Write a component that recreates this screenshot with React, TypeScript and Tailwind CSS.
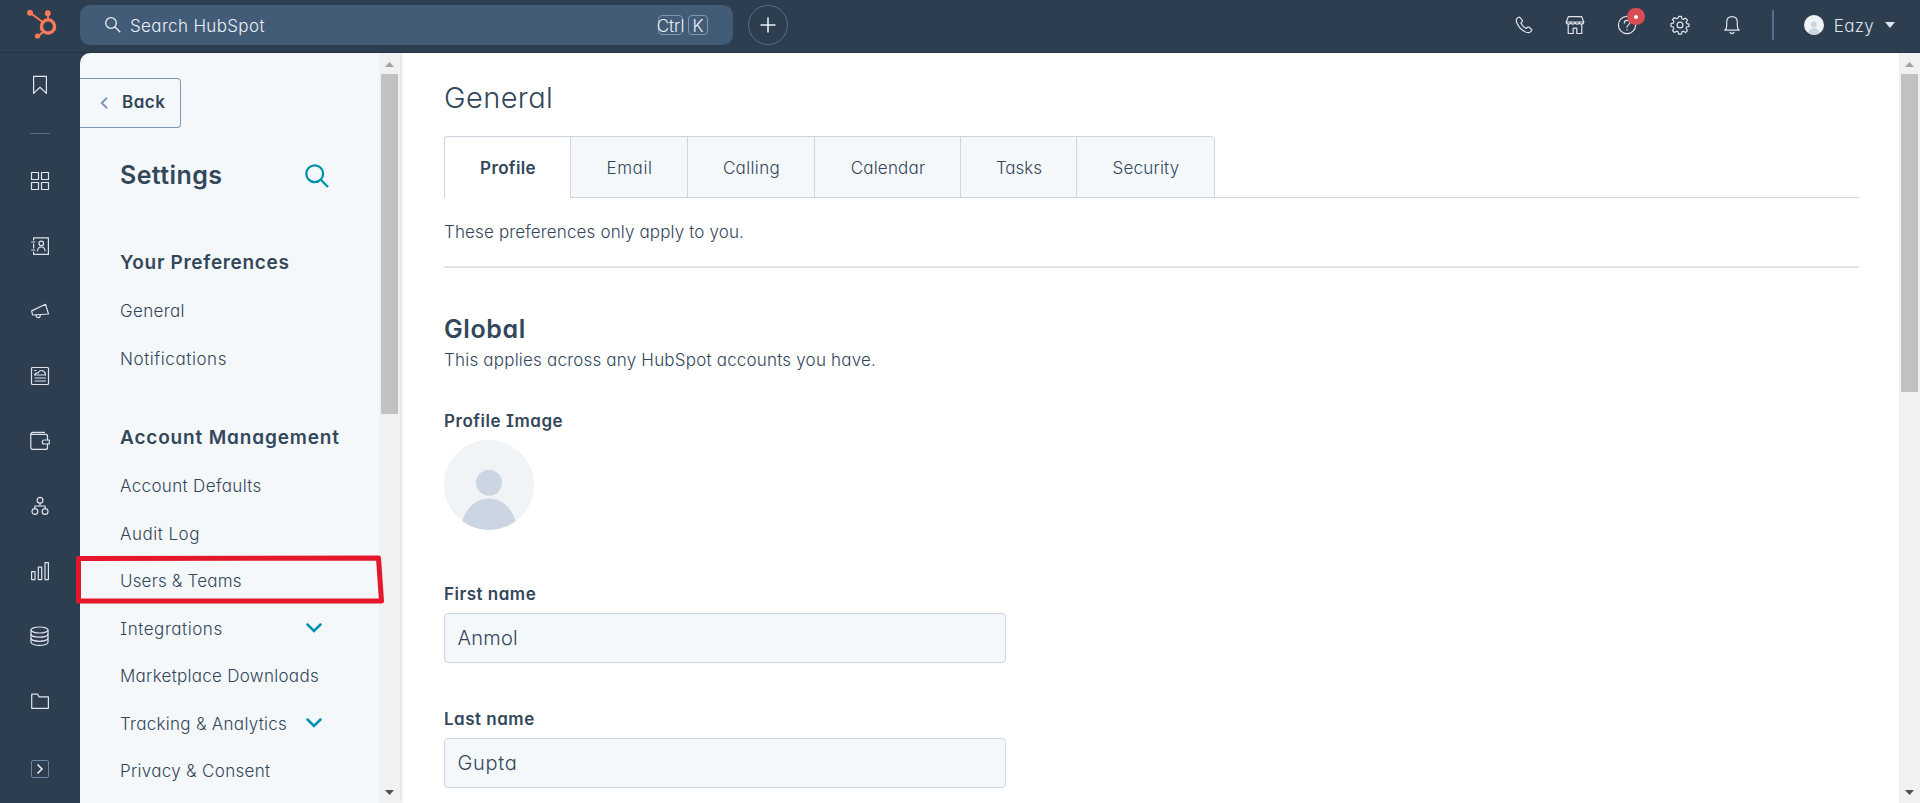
import React from "react";

interface NavItem {
    label: string;
    spacing: string;
    expandable?: boolean;
}

const preferences: NavItem[] = [
    { label: "General", spacing: "tracking-[0.35px]" },
    { label: "Notifications", spacing: "tracking-[0.58px]" },
];

const accountManagement: NavItem[] = [
    { label: "Account Defaults", spacing: "tracking-[0.35px]" },
    { label: "Audit Log", spacing: "tracking-[0.5px]" },
    { label: "Users & Teams", spacing: "tracking-[0.17px]" },
    { label: "Integrations", spacing: "tracking-[0.55px]", expandable: true },
    { label: "Marketplace Downloads", spacing: "tracking-[0.28px]" },
    { label: "Tracking & Analytics", spacing: "tracking-[0.28px]", expandable: true },
    { label: "Privacy & Consent", spacing: "tracking-[0.3px]" },
];

const tabs = [
    { label: "Profile", className: "w-[126px] bg-white border-b-transparent font-semibold tracking-[0.35px] rounded-tl-[4px]" },
    { label: "Email", className: "w-[117px] bg-[#f5f8fa] tracking-[0.6px]" },
    { label: "Calling", className: "w-[127px] bg-[#f5f8fa] tracking-[0.35px]" },
    { label: "Calendar", className: "w-[146px] bg-[#f5f8fa] tracking-[0.2px]" },
    { label: "Tasks", className: "w-[116px] bg-[#f5f8fa]" },
    { label: "Security", className: "w-[139px] bg-[#f5f8fa] tracking-[0.2px] border-r rounded-tr-[4px]" },
];

function Icon({ children, className = "size-5" }: { children: React.ReactNode; className?: string }) {
    return (
        <svg
            viewBox="0 0 20 20"
            fill="none"
            stroke="currentColor"
            strokeWidth="1.2"
            strokeLinejoin="round"
            strokeLinecap="round"
            className={className}
        >
            {children}
        </svg>
    );
}

const railIcons: { name: string; icon: React.ReactNode }[] = [
    {
        name: "Workspaces",
        icon: (
            <>
                <rect x="1.5" y="1.5" width="7" height="7" />
                <rect x="11.5" y="1.5" width="7" height="7" />
                <rect x="1.5" y="11.5" width="7" height="7" />
                <rect x="11.5" y="11.5" width="7" height="7" />
            </>
        ),
    },
    {
        name: "Contacts",
        icon: (
            <>
                <path d="M3.6 4V1.8h14.8v16.6H3.6v-2.2M3.6 8v4" />
                <path d="M1.6 6h3.2M1.6 14h3.2" />
                <circle cx="11.3" cy="7.4" r="2.3" />
                <path d="M7.6 14.8c.2-2.6 1.7-3.8 3.7-3.8s3.5 1.2 3.7 3.8" />
            </>
        ),
    },
    {
        name: "Marketing",
        icon: (
            <>
                <path d="M1.7 9.9 15.5 3.3l3 9.7-16 1z" />
                <path d="M6 14c.2 1.6 1.1 2.7 2.3 2.7s2-1 2-2.9" />
            </>
        ),
    },
    {
        name: "Content",
        icon: (
            <>
                <rect x="1.5" y="1.5" width="17" height="17" rx="1" />
                <path d="M4.5 9c.5-1.7 2-2.3 3.7-2 .8-2 2.5-2.8 4-2.3 2 .5 3.2 2 3.3 4.3zM5 12h10.5M5 15h10.5" />
                <path d="M4.5 4.5H6" />
            </>
        ),
    },
    {
        name: "Commerce",
        icon: (
            <>
                <path d="M14.5 1.3H3.2C1.8 1.3.8 2 .8 3.4v12.8c0 1.3.9 2.2 2.2 2.2h12.5c1.2 0 2-.8 2-2v-3.3" />
                <path d="M.8 3.4h14.7c1.2 0 2 .6 2 1.8v3.6" />
                <path d="M19.3 9h-5a2 2 0 0 0 0 4h5z" />
            </>
        ),
    },
    {
        name: "Automations",
        icon: (
            <>
                <circle cx="10" cy="4.3" r="2.9" />
                <circle cx="4.9" cy="15.5" r="2.9" />
                <circle cx="15.1" cy="15.5" r="2.9" />
                <path d="M10 7.2V10M4.9 12.6V10h10.2v2.6" />
            </>
        ),
    },
    {
        name: "Reporting",
        icon: (
            <>
                <rect x="1.6" y="10.6" width="3.4" height="8" />
                <rect x="8.3" y="6.2" width="3.4" height="12.4" />
                <rect x="15" y="1.6" width="3.4" height="17" />
            </>
        ),
    },
    {
        name: "Data",
        icon: (
            <>
                <ellipse cx="9.5" cy="4" rx="8.5" ry="3" />
                <path d="M1 4v12.2c0 1.8 3.8 3.2 8.5 3.2s8.5-1.4 8.5-3.2V4" />
                <path d="M1 8.2c0 1.7 3.8 3 8.5 3s8.5-1.3 8.5-3M1 12.3c0 1.7 3.8 3 8.5 3s8.5-1.3 8.5-3" />
            </>
        ),
    },
    {
        name: "Library",
        icon: <path d="M1.7 3.2h5.8l1.7 2.6h9.2v11.5H1.7z" />,
    },
];

function Logo() {
    return (
        <svg viewBox="0 0 30 30" className="size-[30px] text-[#ff7a59]" fill="none" stroke="currentColor">
            <circle cx="21" cy="16.5" r="6.6" strokeWidth="3.4" />
            <path d="M3.5 3 15.5 12M21 4v7M16.5 21.5 11 26.5" strokeWidth="1.9" />
            <g fill="currentColor" stroke="none">
                <circle cx="3" cy="2.8" r="3" />
                <circle cx="20.8" cy="3.2" r="2.9" />
                <circle cx="10.5" cy="26" r="2.6" />
            </g>
        </svg>
    );
}

function Avatar({ className }: { className: string }) {
    return (
        <svg viewBox="0 0 90 90" className={className}>
            <clipPath id="avatar-clip">
                <circle cx="45" cy="45" r="45" />
            </clipPath>
            <g clipPath="url(#avatar-clip)">
                <rect width="90" height="90" fill="#f0f4f7" />
                <circle cx="45" cy="42.7" r="13" fill="#cbd6e2" />
                <path d="M18 83c3-14 13.5-24.5 27-24.5S69 69 72 83v8H18z" fill="#cbd6e2" />
            </g>
        </svg>
    );
}

function Scrollbar({ thumb }: { thumb: string }) {
    return (
        <div className="flex w-[21px] shrink-0 flex-col items-center bg-[#f1f1f1]">
            <svg viewBox="0 0 21 21" className="h-[21px] w-[21px] shrink-0">
                <path d="M6 14h9l-4.5-5z" fill="#a3a3a3" />
            </svg>
            <div className={`w-[17px] shrink-0 bg-[#c1c1c1] ${thumb}`} />
            <svg viewBox="0 0 21 21" className="mt-auto h-[21px] w-[21px] shrink-0">
                <path d="M6 8h9l-4.5 5z" fill="#505050" />
            </svg>
        </div>
    );
}

function NavGroup({ title, items, spacing }: { title: string; items: NavItem[]; spacing: string }) {
    return (
        <div>
            <h3 className={`flex h-[50.5px] items-center text-[19px] font-semibold whitespace-nowrap ${spacing}`}>{title}</h3>
            <ul>
                {items.map((item) => (
                    <li key={item.label} className="flex h-[47.5px] items-center justify-between pr-[57px]">
                        <span className={`whitespace-nowrap ${item.spacing}`}>{item.label}</span>
                        {item.expandable && (
                            <svg viewBox="0 0 16 10" fill="none" className="mb-1 h-2.5 w-4 text-[#0091ae]">
                                <path d="M1.5 1.5 8 8l6.5-6.5" stroke="currentColor" strokeWidth="2.5" strokeLinecap="round" />
                            </svg>
                        )}
                    </li>
                ))}
            </ul>
        </div>
    );
}

function Field({ label, value, spacing }: { label: string; value: string; spacing: string }) {
    return (
        <div>
            <label className="flex h-6 items-center font-semibold tracking-[0.5px]">{label}</label>
            <input
                readOnly
                value={value}
                className={`mt-1.5 block h-[50px] w-[562px] rounded-[4px] border border-[#cbd6e2] bg-[#f5f8fa] px-[12.5px] text-[20px] ${spacing}`}
            />
        </div>
    );
}

function TopBar() {
    return (
        <header className="flex h-[53px] shrink-0 border-b border-[#253342] text-[#eaf0f6]">
            <div className="w-20 shrink-0 pt-[9.5px] pl-[27px]">
                <Logo />
            </div>
            <div className="mt-[5px] flex h-10 w-[653px] items-center rounded-[10px] bg-[#425b76] pr-[25px] pl-[25px]">
                <svg viewBox="0 0 16 16" className="size-4" fill="none" stroke="currentColor" strokeWidth="1.3">
                    <circle cx="6" cy="6" r="5.3" />
                    <path d="M9.8 9.8 15.3 15.3" />
                </svg>
                <span className="ml-[9px] pt-[3px] tracking-[0.35px]">Search HubSpot</span>
                <kbd className="ml-auto flex h-5 w-[25px] items-center justify-center rounded-[4px] border border-[#7c98b6] pt-[3px] font-[Inter]">
                    Ctrl
                </kbd>
                <kbd className="ml-[5px] flex size-5 items-center justify-center rounded-[4px] border border-[#7c98b6] pt-[3px] font-[Inter]">
                    K
                </kbd>
            </div>
            <div className="mt-[5px] ml-[15px] flex size-10 items-center justify-center rounded-full border border-[#516f90]">
                <svg viewBox="0 0 16 16" className="size-4" stroke="currentColor" strokeWidth="1.6">
                    <path d="M8 .5v15M.5 8h15" />
                </svg>
            </div>
            <div className="ml-auto flex h-[50px] items-center text-[#dfe3eb]">
                <Icon className="mr-[31px] size-5">
                    <path d="M4.4 2.4 3 3.5c-1 .9-.8 2.6-.2 4.2 1.7 4.3 5 7.7 9.4 9.5 1.7.6 3.2.8 4.2-.3l1-1c.5-.5.5-1.1 0-1.6l-2.3-2c-.5-.4-1.2-.4-1.6 0l-1.3 1.2c-2-.9-4.3-3.2-5.3-5.5l1.2-1.2c.4-.5.4-1 0-1.6L6 2.5c-.5-.5-1.1-.5-1.6-.1z" />
                </Icon>
                <Icon className="mr-8 size-5">
                    <path d="M3.3 1.6h13.4l2 5.4H1.3z" />
                    <path d="M1.3 7c0 2.8 4.3 2.8 4.3.3 0 2.5 4.4 2.5 4.4 0 0 2.5 4.4 2.5 4.4 0 0 2.5 4.3 2.5 4.3-.3" />
                    <path d="M3.2 9.5v9h5v-5.3h3.6v5.3h5v-9" />
                </Icon>
                <div className="relative mr-[33px]">
                    <Icon>
                        <circle cx="10" cy="10" r="8.6" />
                        <path d="M7.3 8c0-3.6 5.6-3.5 5.5-.2 0 2-2.8 2.2-2.8 4.4M10 14.5v.4" />
                    </Icon>
                    <span className="absolute -top-[7px] left-[10px] flex h-[17px] w-[18px] items-center justify-center rounded-full bg-[#d94c53]">
                        <span className="size-1 rounded-full bg-white" />
                    </span>
                </div>
                <Icon className="mr-8 size-5">
                    <circle cx="10" cy="10" r="2.9" />
                    <path d="M8.6 1.4h2.8l.5 2.4 1.5.6 2.1-1.3 2 2-1.4 2 .7 1.5 2.2.5v2.3l-2.3.6-.6 1.5 1.3 2.1-2 2-2-1.4-1.5.7-.5 2.2H8.6l-.5-2.3-1.5-.6-2.1 1.3-2-2 1.4-2-.7-1.5-2.2-.5V8.7l2.3-.6.6-1.5-1.3-2.1 2-2 2 1.3 1.5-.6z" />
                </Icon>
                <Icon className="mr-[30px] size-5">
                    <path d="M2.8 15.2c1.5-1 1.9-2.3 1.9-4.2V7c0-3.3 2.2-5.4 5.3-5.4s5.3 2.1 5.3 5.4v4c0 1.9.4 3.2 1.9 4.2zM8 17.4c.8 1.5 3.2 1.5 4 0" />
                </Icon>
                <div className="h-[30px] w-0.5 bg-[#516f90]" />
                <Avatar className="ml-[30px] size-5" />
                <span className="ml-2.5 pt-[3px] tracking-[0.3px]">Eazy</span>
                <svg viewBox="0 0 10 6" className="mr-[25px] ml-[11px] h-1.5 w-2.5" fill="currentColor">
                    <path d="M0 0h10L5 6z" />
                </svg>
            </div>
        </header>
    );
}

function Rail() {
    return (
        <nav className="flex w-20 shrink-0 flex-col items-center text-[#dfe3eb]">
            <div className="flex h-[64px] items-center">
                <Icon>
                    <path d="M3.6 1.4h12.8v17L10 12.3l-6.4 6.1z" />
                </Icon>
            </div>
            <div className="mt-4 h-px w-5 bg-[#516f90]" />
            <div className="mt-[14px]">
                {railIcons.map(({ name, icon }) => (
                    <div key={name} title={name} className="flex h-[65px] items-center">
                        <Icon>{icon}</Icon>
                    </div>
                ))}
            </div>
            <div className="mt-[27px] flex size-[18px] items-center justify-center rounded-[2px] border border-[#6b87a6]">
                <svg viewBox="0 0 8 12" className="h-3 w-2" fill="none" stroke="currentColor" strokeWidth="1.7">
                    <path d="M1.5 1.5 6 6l-4.5 4.5" />
                </svg>
            </div>
        </nav>
    );
}

function Sidebar() {
    return (
        <aside className="relative flex w-80 shrink-0 shadow-[1px_0_4px_rgba(45,62,80,0.22)]">
            <div className="flex-1 overflow-hidden rounded-tl-[10px] bg-[#f5f8fa] pt-[25px]">
                <button className="flex h-[50px] w-[101px] items-center rounded-r-[4px] border border-l-0 border-[#7c98b6] pl-5 font-semibold tracking-[0.5px]">
                    <svg viewBox="0 0 8 12" className="mr-3.5 h-3 w-2 text-[#7c98b6]" fill="none" stroke="currentColor" strokeWidth="2">
                        <path d="M7 .8 1.8 6 7 11.2" />
                    </svg>
                    Back
                </button>
                <div className="mt-7 flex h-10 items-center justify-between pr-[50px] pl-10">
                    <h2 className="text-[25px] font-semibold tracking-[0.4px]">Settings</h2>
                    <svg viewBox="0 0 24 24" className="size-6 text-[#0091ae]" fill="none" stroke="currentColor" strokeWidth="2.3">
                        <circle cx="9.7" cy="9.7" r="8.4" />
                        <path d="M15.8 15.8 23 23" />
                    </svg>
                </div>
                <div className="mt-[41.75px] flex flex-col gap-[29.5px] pl-10">
                    <NavGroup title="Your Preferences" items={preferences} spacing="tracking-[0.68px]" />
                    <NavGroup title="Account Management" items={accountManagement} spacing="tracking-[0.84px]" />
                </div>
            </div>
            <Scrollbar thumb="h-[340px]" />
            {/* hand drawn marker around Users & Teams */}
            <svg viewBox="0 0 310 50" className="absolute top-[501px] -left-[5px] h-[50px] w-[310px]" fill="none">
                <path d="M3.5 4.5 303.5 4 306.5 47H3.5z" stroke="#e5182b" strokeWidth="5" strokeLinejoin="round" />
            </svg>
        </aside>
    );
}

function ProfileSettings() {
    return (
        <main className="flex-1 overflow-hidden bg-white pt-[21px] pr-10 pl-11">
            <h1 className="flex h-12 items-center text-[29px] tracking-[0.4px]">General</h1>
            <div className="mt-3.5 flex h-[62px]">
                {tabs.map((tab) => (
                    <div
                        key={tab.label}
                        className={`flex items-center justify-center border-t border-b border-l border-[#cbd6e2] pt-[3px] pl-px ${tab.className}`}
                    >
                        {tab.label}
                    </div>
                ))}
                <div className="flex-1 border-b border-[#cbd6e2]" />
            </div>
            <p className="flex h-[67px] items-center pt-0.5 tracking-[0.14px]">These preferences only apply to you.</p>
            <div className="mt-px h-0.5 bg-[#dfe3eb]" />

            <h2 className="mt-[45px] flex h-[34px] items-center text-[25px] font-semibold tracking-[0.6px]">Global</h2>
            <p className="flex h-7 items-center tracking-[0.2px]">This applies across any HubSpot accounts you have.</p>

            <h4 className="mt-[35px] flex h-6 items-center font-semibold tracking-[0.54px]">Profile Image</h4>
            <Avatar className="mt-1.5 size-[90px]" />

            <div className="mt-[53px] flex flex-col gap-[45px]">
                <Field label="First name" value="Anmol" spacing="tracking-[0.25px]" />
                <Field label="Last name" value="Gupta" spacing="tracking-[0.7px]" />
            </div>
        </main>
    );
}

export default function App() {
    return (
        <div className="flex h-[803px] w-[1920px] flex-col overflow-hidden bg-[#2d3e50] font-[Inter,sans-serif] text-[17px] font-light text-[#33475b] [font-feature-settings:'cv11','cv08']">
            <TopBar />
            <div className="flex min-h-0 flex-1">
                <Rail />
                <Sidebar />
                <ProfileSettings />
                <Scrollbar thumb="h-[318px]" />
            </div>
        </div>
    );
}
